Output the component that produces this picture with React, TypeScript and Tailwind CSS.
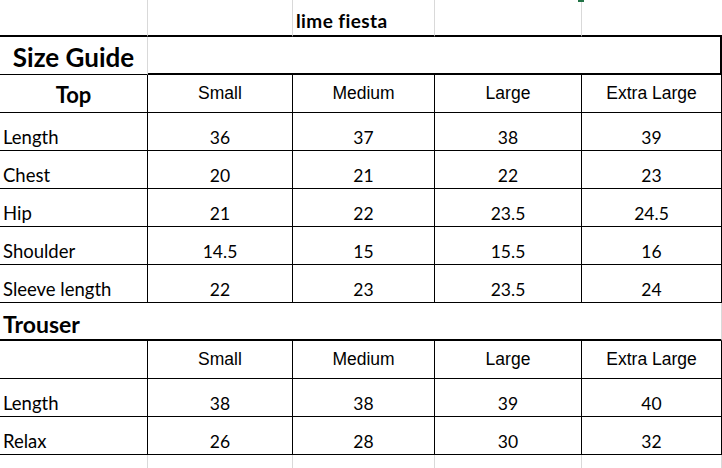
import clsx from 'clsx';

type Row = { label: string; values: string[] };

const topRows: Row[] = [
  { label: 'Length', values: ['36', '37', '38', '39'] },
  { label: 'Chest', values: ['20', '21', '22', '23'] },
  { label: 'Hip', values: ['21', '22', '23.5', '24.5'] },
  { label: 'Shoulder', values: ['14.5', '15', '15.5', '16'] },
  { label: 'Sleeve length', values: ['22', '23', '23.5', '24'] },
];

const trouserRows: Row[] = [
  { label: 'Length', values: ['38', '38', '39', '40'] },
  { label: 'Relax', values: ['26', '28', '30', '32'] },
];

const sizes = ['Small', 'Medium', 'Large', 'Extra Large'];

const body = "font-['Lato',sans-serif]";
const arial = "font-['Liberation_Sans',Arial,sans-serif]";

function HeaderRow({ first }: { first?: string }) {
  return (
    <>
      <div className="flex h-[38px] items-center justify-center border-r border-b border-black pt-[2px]">
        {first && <span className={clsx(body, 'text-[22px] leading-none font-bold')}>{first}</span>}
      </div>
      {sizes.map((s) => (
        <div
          key={s}
          className={clsx(
            arial,
            'flex h-[38px] items-center justify-center border-r border-b border-black text-[17.5px] leading-none'
          )}
        >
          {s}
        </div>
      ))}
    </>
  );
}

function DataRow({ row }: { row: Row }) {
  return (
    <>
      <div className="flex h-[38px] items-end border-r border-b border-black pb-[4px] pl-[3px] text-[18.5px] leading-none">
        {row.label}
      </div>
      {row.values.map((v, i) => (
        <div
          key={i}
          className="flex h-[38px] items-end justify-center border-r border-b border-black pb-[4px] text-[17.5px] leading-none"
        >
          {v}
        </div>
      ))}
    </>
  );
}

export default function App() {
  return (
    <div className={clsx(body, 'relative h-[468px] w-[722px] overflow-hidden bg-white text-black')}>
      <div className="absolute top-0 left-[578px] h-[2px] w-[6px] bg-[#217346]" />
      <div className="grid grid-cols-[148px_145px_142px_147px_140px]">
        {/* title row */}
        <div className="h-[37px] border-r border-b-2 border-r-[#d9d9d9] border-b-black" />
        <div className="h-[37px] border-r border-b-2 border-r-[#d9d9d9] border-b-black" />
        <div className="flex h-[37px] items-end border-r border-b-2 border-r-[#d9d9d9] border-b-black pb-[5px] pl-[3px]">
          <span className="text-[19px] leading-none font-bold tracking-[0.4px] whitespace-nowrap [font-variant-ligatures:none]">
            lime fiesta
          </span>
        </div>
        <div className="h-[37px] border-r border-b-2 border-r-[#d9d9d9] border-b-black" />
        <div className="h-[37px] border-b-2 border-b-black" />

        {/* size guide */}
        <div className="flex h-[38px] items-end justify-center border-r border-b border-r-[#d9d9d9] border-b-black pb-[4px]">
          <span className="text-[26px] leading-none font-bold">Size Guide</span>
        </div>
        <div className="col-span-4 h-[38px] border-r-2 border-b-2 border-black" />

        <HeaderRow first="Top" />
        {topRows.map((r) => (
          <DataRow key={r.label} row={r} />
        ))}

        {/* trouser */}
        <div className="col-span-5 flex h-[38px] items-end border-r border-b-2 border-r-[#d9d9d9] border-b-black pb-[3px] pl-[3px]">
          <span className="text-[23px] leading-none font-bold">Trouser</span>
        </div>

        <HeaderRow />
        {trouserRows.map((r) => (
          <DataRow key={r.label} row={r} />
        ))}

        {/* empty gridline row */}
        <div className="h-[14px] border-r border-[#d9d9d9]" />
        <div className="h-[14px] border-r border-[#d9d9d9]" />
        <div className="h-[14px] border-r border-[#d9d9d9]" />
        <div className="h-[14px] border-r border-[#d9d9d9]" />
        <div className="h-[14px] border-r border-[#d9d9d9]" />
      </div>
    </div>
  );
}
